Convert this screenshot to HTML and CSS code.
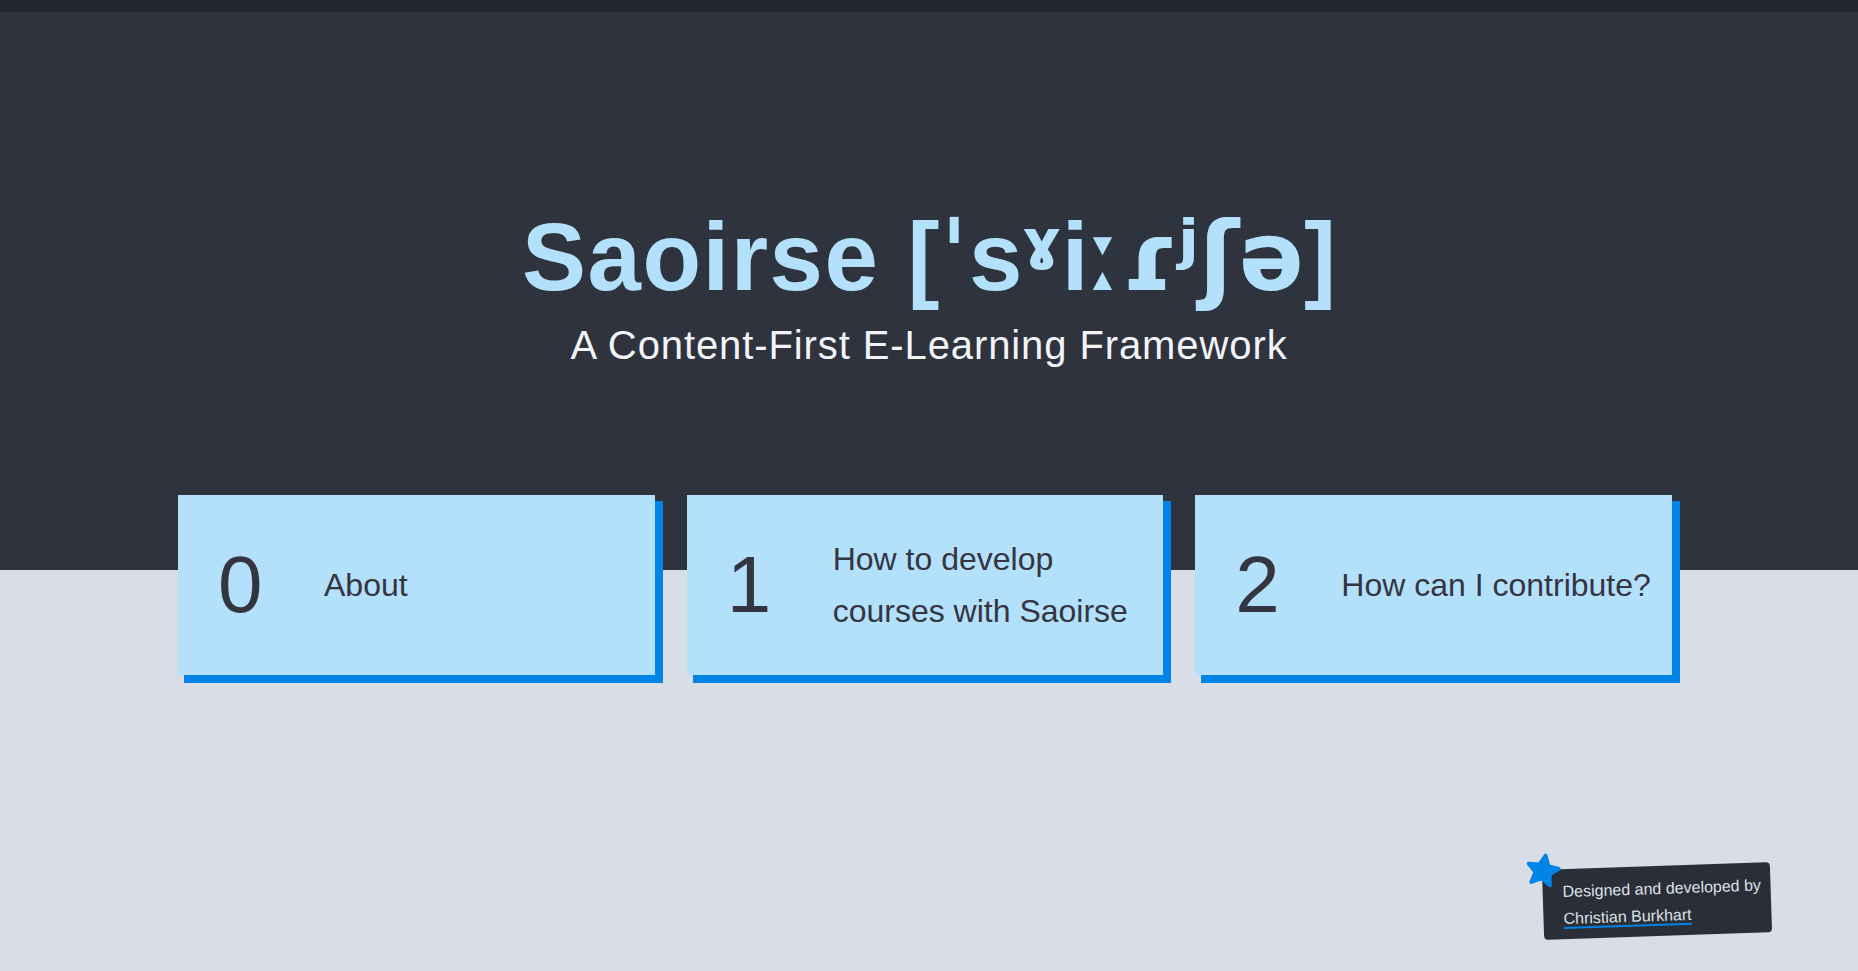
FILE: index.html
```html
<!DOCTYPE html>
<html lang="en">
<head>
<meta charset="utf-8">
<title>Saoirse</title>
<link rel="stylesheet" href="styles.css">
</head>
<body>
<div class="topbar"></div>
<header class="hero">
  <h1 class="title">Saoirse <span class="pron">[<span class="ipa">ˈ</span>s<span class="ipa">ˠ</span>i<span class="ipa">ːɾʲʃə</span>]</span></h1>
  <p class="subtitle">A Content-First E-Learning Framework</p>
</header>
<main class="cards">
  <a class="card" href="#about"><span class="num">0</span><span class="label">About</span></a>
  <a class="card" href="#develop"><span class="num">1</span><span class="label">How to develop courses with Saoirse</span></a>
  <a class="card" href="#contribute"><span class="num">2</span><span class="label">How can I contribute?</span></a>
</main>
<aside class="badge">
  <svg class="star" viewBox="0 0 24 24" aria-hidden="true"><path d="M12 3.2l2.6 5.6 6.1.6-4.6 4.1 1.3 6-5.4-3.1-5.4 3.1 1.3-6-4.6-4.1 6.1-.6z" fill="#0084e8" stroke="#0084e8" stroke-width="2.2" stroke-linejoin="round"/></svg>
  <div class="badge-line">Designed and developed by</div>
  <div class="badge-line"><a class="badge-link" href="#">Christian Burkhart</a></div>
</aside>
</body>
</html>
```

FILE: styles.css
```css
html, body {
  margin: 0;
  padding: 0;
}
body {
  background: #d9dde5;
  font-family: "Liberation Sans", Arial, "DejaVu Sans", sans-serif;
  min-height: 971px;
}
.topbar {
  height: 12px;
  background: #23272f;
}
.hero {
  background: #2f333d;
  height: 558px;
  box-sizing: border-box;
  padding-top: 187px;
  text-align: center;
}
.title {
  margin: 0;
  font-size: 96px;
  line-height: 115px;
  font-weight: 700;
  letter-spacing: 1.5px;
  color: #b3e0fa;
}
.pron {
  letter-spacing: 0;
}
.ipa {
  font-family: "DejaVu Sans", sans-serif;
}
.subtitle {
  margin: 6px 0 0;
  font-size: 40px;
  line-height: 48px;
  letter-spacing: 0.9px;
  color: #f2f4f7;
}
.cards {
  display: grid;
  grid-template-columns: repeat(3, 1fr);
  gap: 32px;
  width: 1494px;
  margin: -75px 0 0 178px;
}
.card {
  display: flex;
  align-items: center;
  height: 180px;
  box-sizing: border-box;
  padding: 0 10px 0 40px;
  background: #b3e0fa;
  box-shadow: 7px 7px 0 1px #0084e8;
  color: #353541;
  text-decoration: none;
}
.num {
  flex: 0 0 106px;
  font-size: 80px;
  line-height: 1;
}
.label {
  font-size: 32px;
  line-height: 52px;
}
.badge {
  position: absolute;
  right: 87px;
  top: 866px;
  width: 228px;
  height: 70px;
  box-sizing: border-box;
  padding: 9px 8px 0 20px;
  background: #2a2f37;
  border-radius: 4px;
  transform: rotate(-1.9deg);
  color: #dde1e8;
  font-size: 16px;
  line-height: 27px;
}
.star {
  position: absolute;
  left: -20px;
  top: -20px;
  width: 42px;
  height: 42px;
  transform: rotate(12deg);
}
.badge-link {
  color: #dde1e8;
  text-decoration: underline;
  text-decoration-color: #0084e8;
  text-decoration-thickness: 2px;
  text-underline-offset: 3px;
}
```
